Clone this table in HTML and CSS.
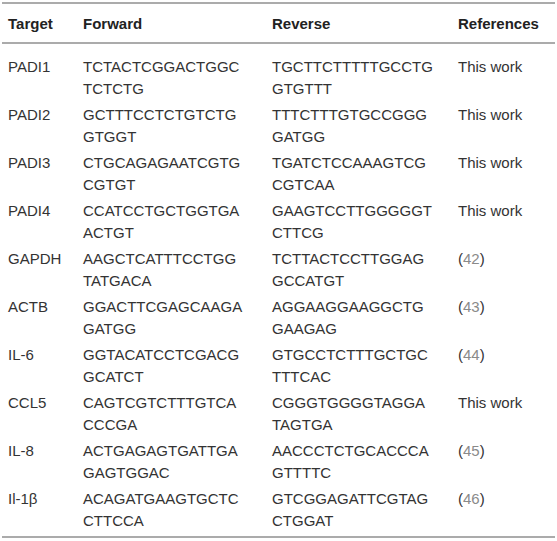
FILE: index.html
```html
<!DOCTYPE html>
<html>
<head>
<meta charset="utf-8">
<link rel="stylesheet" href="styles.css">
</head>
<body>
<table class="primers">
  <colgroup>
    <col class="c-target"><col class="c-fwd"><col class="c-rev"><col class="c-ref">
  </colgroup>
  <thead>
    <tr><th>Target</th><th>Forward</th><th>Reverse</th><th>References</th></tr>
  </thead>
  <tbody>
    <tr><td>PADI1</td><td>TCTACTCGGACTGGC<br>TCTCTG</td><td>TGCTTCTTTTTGCCTG<br>GTGTTT</td><td>This work</td></tr>
    <tr><td>PADI2</td><td>GCTTTCCTCTGTCTG<br>GTGGT</td><td>TTTCTTTGTGCCGGG<br>GATGG</td><td>This work</td></tr>
    <tr><td>PADI3</td><td>CTGCAGAGAATCGTG<br>CGTGT</td><td>TGATCTCCAAAGTCG<br>CGTCAA</td><td>This work</td></tr>
    <tr><td>PADI4</td><td>CCATCCTGCTGGTGA<br>ACTGT</td><td>GAAGTCCTTGGGGGT<br>CTTCG</td><td>This work</td></tr>
    <tr><td>GAPDH</td><td>AAGCTCATTTCCTGG<br>TATGACA</td><td>TCTTACTCCTTGGAG<br>GCCATGT</td><td>(<span class="ref">42</span>)</td></tr>
    <tr><td>ACTB</td><td>GGACTTCGAGCAAGA<br>GATGG</td><td>AGGAAGGAAGGCTG<br>GAAGAG</td><td>(<span class="ref">43</span>)</td></tr>
    <tr><td>IL-6</td><td>GGTACATCCTCGACG<br>GCATCT</td><td>GTGCCTCTTTGCTGC<br>TTTCAC</td><td>(<span class="ref">44</span>)</td></tr>
    <tr><td>CCL5</td><td>CAGTCGTCTTTGTCA<br>CCCGA</td><td>CGGGTGGGGTAGGA<br>TAGTGA</td><td>This work</td></tr>
    <tr><td>IL-8</td><td>ACTGAGAGTGATTGA<br>GAGTGGAC</td><td>AACCCTCTGCACCCA<br>GTTTTC</td><td>(<span class="ref">45</span>)</td></tr>
    <tr><td>Il-1β</td><td>ACAGATGAAGTGCTC<br>CTTCCA</td><td>GTCGGAGATTCGTAG<br>CTGGAT</td><td>(<span class="ref">46</span>)</td></tr>
  </tbody>
</table>
</body>
</html>
```

FILE: styles.css
```css
html, body {
  margin: 0;
  padding: 0;
  background: #fff;
}
body {
  padding: 2px 2px 0 2px;
  font-family: "Liberation Sans", Arial, sans-serif;
  font-size: 15px;
  color: #333;
}
.primers {
  border-collapse: collapse;
  table-layout: fixed;
  width: 553px;
  border-top: 2px solid #ababab;
  border-bottom: 2px solid #ababab;
}
.c-target { width: 81px; }
.c-fwd { width: 189px; }
.c-rev { width: 186px; }
.c-ref { width: 97px; }
.primers th {
  text-align: left;
  font-weight: bold;
  color: #222;
  height: 38px;
  padding: 0;
  vertical-align: middle;
  border-bottom: 2px solid #ababab;
}
.primers td {
  vertical-align: top;
  line-height: 22px;
  padding: 2px 0 2px 0;
  white-space: nowrap;
}
.primers th:first-child, .primers td:first-child {
  padding-left: 6px;
}
.primers tbody tr:first-child td { padding-top: 12px; }
.primers tbody tr:last-child td { padding-bottom: 4px; }
.ref { color: #8a8a8a; }
```
